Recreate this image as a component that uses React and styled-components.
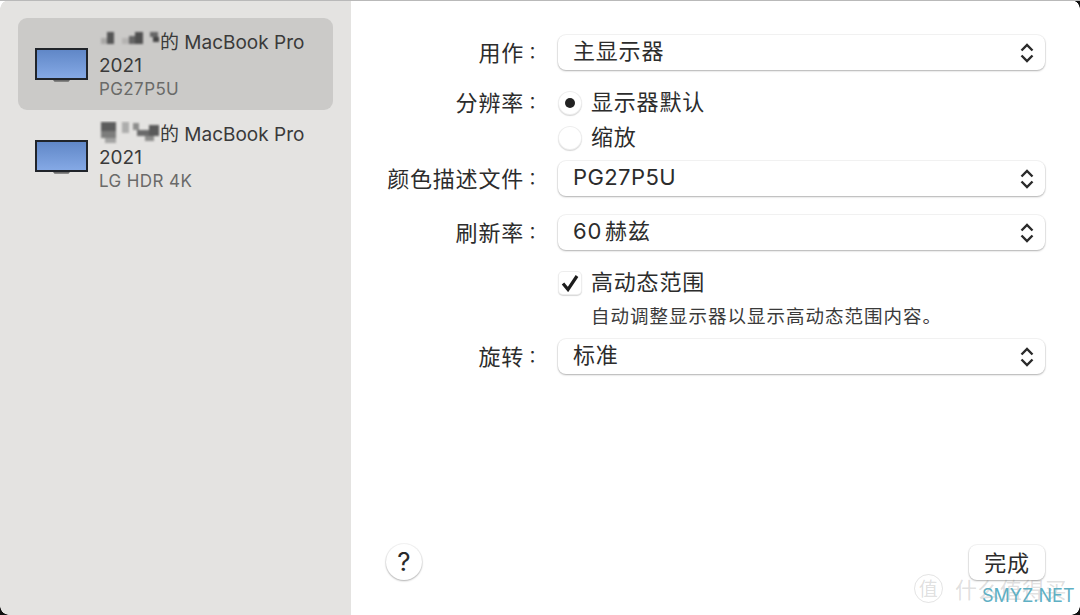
import React from "react";
import styled, { createGlobalStyle } from "styled-components";

const GlobalStyle = createGlobalStyle`
  html, body {
    margin: 0;
    padding: 0;
    background: #fff;
  }
  body {
    font-family: "Inter", "Noto Sans CJK SC", sans-serif;
  }
`;

const Sheet = styled.div`
  position: relative;
  width: 1080px;
  height: 615px;
  display: flex;
  overflow: hidden;
  background: #fff;
  border-top: 1px solid #b9b9b9;
  box-sizing: border-box;
  font-family: "Inter", "Noto Sans CJK SC", sans-serif;
  color: #2c2c2c;
`;

const Sidebar = styled.aside`
  width: 351px;
  flex: none;
  box-sizing: border-box;
  padding: 17px 18px 0;
  background: #e4e3e1;
  display: flex;
  flex-direction: column;
`;

const DisplayRow = styled.div`
  height: 92px;
  border-radius: 9px;
  display: flex;
  align-items: center;
  background: ${(p) => (p.$selected ? "#cbcac8" : "transparent")};
  padding-left: 17px;
  box-sizing: border-box;
`;

const DisplayText = styled.div`
  margin-left: 10px;
  display: flex;
  flex-direction: column;
`;

const NameLine = styled.div`
  display: flex;
  align-items: center;
  height: 24.5px;
  font-size: 19px;
  letter-spacing: 0;
  color: #3a3a3a;
`;

const SubLine = styled.div`
  height: 22px;
  line-height: 22px;
  font-size: 17px;
  letter-spacing: 0.4px;
  color: #6a6a69;
`;

const MonitorSvg = styled.svg`
  flex: none;
  margin-top: 3px;
`;

const Main = styled.main`
  flex: 1;
  position: relative;
  box-sizing: border-box;
  padding: 34px 35px 0 0;
  display: flex;
  flex-direction: column;
`;

const FormRow = styled.div`
  display: grid;
  grid-template-columns: 190px 1fr;
  column-gap: 17px;
  align-items: center;
  height: ${(p) => p.$height || 35}px;
  margin-bottom: ${(p) => p.$gap || 0}px;
`;

const Label = styled.div`
  justify-self: end;
  font-family: "Noto Sans CJK SC", sans-serif;
  font-size: 22px;
  letter-spacing: 0.8px;
  line-height: 30px;
  margin-bottom: 3px;
  white-space: nowrap;
`;

const Colon = styled.span`
  font-family: "Noto Sans CJK TC", sans-serif;
  font-size: 17px;
  letter-spacing: 0;
  vertical-align: 2px;
`;

const Select = styled.div`
  height: 35px;
  border-radius: 8px;
  background: #fff;
  box-shadow: 0 1px 2px rgba(0, 0, 0, 0.28), 0 0 0 1px rgba(0, 0, 0, 0.045);
  display: flex;
  align-items: center;
  justify-content: space-between;
  padding: 0 10px 0 15px;
`;

const ControlText = styled.span`
  font-size: 22px;
  letter-spacing: ${(p) => (p.$latin ? 0.4 : 0.8)}px;
  word-spacing: -4px;
  line-height: 30px;
  margin-bottom: 3px;
`;

const OptionLine = styled.div`
  grid-column: 2;
  display: flex;
  align-items: center;
  gap: 9px;
`;

const Radio = styled.span`
  width: 24px;
  height: 24px;
  flex: none;
  box-sizing: border-box;
  border-radius: 50%;
  background: #fff;
  box-shadow: inset 0 0 0 1px rgba(0, 0, 0, 0.07), 0 1px 1px rgba(0, 0, 0, 0.16);
  display: flex;
  align-items: center;
  justify-content: center;
  &::after {
    content: "";
    width: 10px;
    height: 10px;
    border-radius: 50%;
    background: ${(p) => (p.$on ? "#222" : "transparent")};
  }
`;

const Checkbox = styled.span`
  width: 24px;
  height: 24px;
  flex: none;
  border-radius: 5px;
  background: #fff;
  box-shadow: inset 0 0 0 1px rgba(0, 0, 0, 0.07), 0 1px 1px rgba(0, 0, 0, 0.16);
  display: flex;
  align-items: center;
  justify-content: center;
`;

const Hint = styled.div`
  grid-column: 2;
  padding-left: 33px;
  font-size: 18.5px;
  letter-spacing: 1px;
  line-height: 26px;
  color: #3a3a3a;
`;

const HelpButton = styled.button`
  position: absolute;
  left: 35px;
  top: 543px;
  width: 36px;
  height: 36px;
  padding: 0;
  border: 0;
  border-radius: 50%;
  background: #fff;
  box-shadow: 0 1px 2px rgba(0, 0, 0, 0.28), 0 0 0 1px rgba(0, 0, 0, 0.045);
  font-family: "Inter", sans-serif;
  font-size: 26px;
  line-height: 36px;
  color: #2a2a2a;
`;

const DoneButton = styled.button`
  position: absolute;
  left: 618px;
  top: 544px;
  width: 76px;
  height: 35px;
  padding: 0 0 3px;
  border: 0;
  border-radius: 8px;
  background: #fff;
  box-shadow: 0 1px 2px rgba(0, 0, 0, 0.28), 0 0 0 1px rgba(0, 0, 0, 0.045);
  font-family: "Noto Sans CJK SC", sans-serif;
  font-size: 22px;
  letter-spacing: 0.8px;
  color: #2c2c2c;
`;

const Watermark = styled.div`
  position: absolute;
  left: 914px;
  top: 572px;
  display: flex;
  align-items: center;
  gap: 12px;
  font-family: "Noto Sans CJK SC", sans-serif;
  color: rgba(120, 120, 120, 0.24);
  font-size: 22px;
  line-height: 30px;
  letter-spacing: 0.4px;
  pointer-events: none;
`;

const WatermarkBadge = styled.span`
  width: 27px;
  height: 27px;
  border: 1.5px solid rgba(120, 120, 120, 0.2);
  border-radius: 50%;
  display: flex;
  align-items: center;
  justify-content: center;
  font-size: 19px;
`;

const SiteMark = styled.div`
  position: absolute;
  left: 982px;
  top: 584px;
  font-family: "Inter", sans-serif;
  font-size: 18px;
  line-height: 22px;
  color: #5fb0c4;
  pointer-events: none;
`;

const Corner = styled.span`
  position: absolute;
  width: 9px;
  height: 9px;
  ${(p) => (p.$top ? "top: -1px;" : "bottom: 0;")}
  ${(p) => (p.$left ? "left: 0;" : "right: 0;")}
  background: radial-gradient(
    circle at ${(p) => (p.$left ? "100%" : "0")} ${(p) => (p.$top ? "100%" : "0")},
    transparent 8.5px,
    ${(p) => p.$color} 9px
  );
`;

const MonitorIcon = () => (
  <MonitorSvg width="54" height="36" viewBox="0 0 54 36">
    <defs>
      <linearGradient id="screen" x1="0" y1="0" x2="0" y2="1">
        <stop offset="0" stopColor="#5f86c6" />
        <stop offset="1" stopColor="#86aae6" />
      </linearGradient>
    </defs>
    <rect x="1" y="1" width="51" height="30" fill="url(#screen)" stroke="#20242a" strokeWidth="2" />
    <path d="M18 32h17l-1.5 1.8h-14z" fill="#6b6b6b" />
  </MonitorSvg>
);

// scrubbed owner name, the reference shows it as a blurred mosaic
const Mosaic = ({ cells }) => (
  <svg width="61" height="24" viewBox="0 0 61 24">
    <g style={{ filter: "blur(1px)" }}>
      {cells.map(([x, y, w, h, c], i) => (
        <rect key={i} x={x} y={y} width={w} height={h} fill={c} />
      ))}
    </g>
  </svg>
);

const firstName = [
  [2, 9, 6, 6, "#a9a8a6"],
  [8, 3, 7, 12, "#555"],
  [23, 9, 7, 6, "#b5b4b2"],
  [30, 7, 6, 8, "#666"],
  [36, 3, 8, 12, "#4f4f4f"],
  [51, 3, 8, 5, "#666"],
  [54, 8, 6, 5, "#444"],
];
const secondName = [
  [2, 1, 15, 9, "#5c5c5c"],
  [2, 10, 15, 7, "#7d7d7c"],
  [6, 17, 11, 5, "#a3a3a2"],
  [23, 1, 7, 11, "#adadac"],
  [34, 2, 6, 7, "#8d8d8c"],
  [38, 9, 12, 6, "#6a6a6a"],
  [50, 4, 10, 11, "#5a5a5a"],
  [46, 15, 9, 5, "#8d8d8c"],
];

const Chevrons = () => (
  <svg width="16" height="24" viewBox="0 0 16 24" fill="none" stroke="#2a2a2a" strokeWidth="2.4">
    <path d="M2.5 9.5 8 4 13.5 9.5" />
    <path d="M2.5 14.5 8 20 13.5 14.5" />
  </svg>
);

const Check = () => (
  <svg width="20" height="18" viewBox="0 0 20 18" fill="none" stroke="#1c1c1c" strokeWidth="3.2">
    <path d="M3 9.5 8 15.5 17 2" />
  </svg>
);

const displays = [
  { sub: "PG27P5U", cells: firstName, selected: true },
  { sub: "LG HDR 4K", cells: secondName },
];

const FieldLabel = ({ children }) => (
  <Label>
    {children}
    <Colon>：</Colon>
  </Label>
);

const SelectRow = ({ label, value, gap, latin }) => (
  <FormRow $gap={gap}>
    <FieldLabel>{label}</FieldLabel>
    <Select>
      <ControlText $latin={latin}>{value}</ControlText>
      <Chevrons />
    </Select>
  </FormRow>
);

export default function App() {
  return (
    <>
      <GlobalStyle />
      <Sheet>
        <Sidebar>
          {displays.map((d) => (
            <DisplayRow key={d.sub} $selected={d.selected}>
              <MonitorIcon />
              <DisplayText>
                <NameLine>
                  <Mosaic cells={d.cells} />的 MacBook Pro
                </NameLine>
                <NameLine>2021</NameLine>
                <SubLine>{d.sub}</SubLine>
              </DisplayText>
            </DisplayRow>
          ))}
        </Sidebar>
        <Main>
          <SelectRow label="用作" value="主显示器" gap={15.5} />
          <FormRow>
            <FieldLabel>分辨率</FieldLabel>
            <OptionLine>
              <Radio $on />
              <ControlText>显示器默认</ControlText>
            </OptionLine>
          </FormRow>
          <FormRow $gap={5.5}>
            <OptionLine>
              <Radio />
              <ControlText>缩放</ControlText>
            </OptionLine>
          </FormRow>
          <SelectRow label="颜色描述文件" value="PG27P5U" gap={19} latin />
          <SelectRow label="刷新率" value="60 赫兹" gap={15.5} />
          <FormRow>
            <OptionLine>
              <Checkbox>
                <Check />
              </Checkbox>
              <ControlText>高动态范围</ControlText>
            </OptionLine>
          </FormRow>
          <FormRow $height={31} $gap={7.5}>
            <Hint>自动调整显示器以显示高动态范围内容。</Hint>
          </FormRow>
          <SelectRow label="旋转" value="标准" />
          <HelpButton>?</HelpButton>
          <DoneButton>完成</DoneButton>
        </Main>
        <Watermark>
          <WatermarkBadge>值</WatermarkBadge>
          什么值得买
        </Watermark>
        <SiteMark>SMYZ.NET</SiteMark>
        <Corner $top $left $color="#fff" />
        <Corner $top $color="#111" />
        <Corner $left $color="#111" />
        <Corner $color="#111" />
      </Sheet>
    </>
  );
}
